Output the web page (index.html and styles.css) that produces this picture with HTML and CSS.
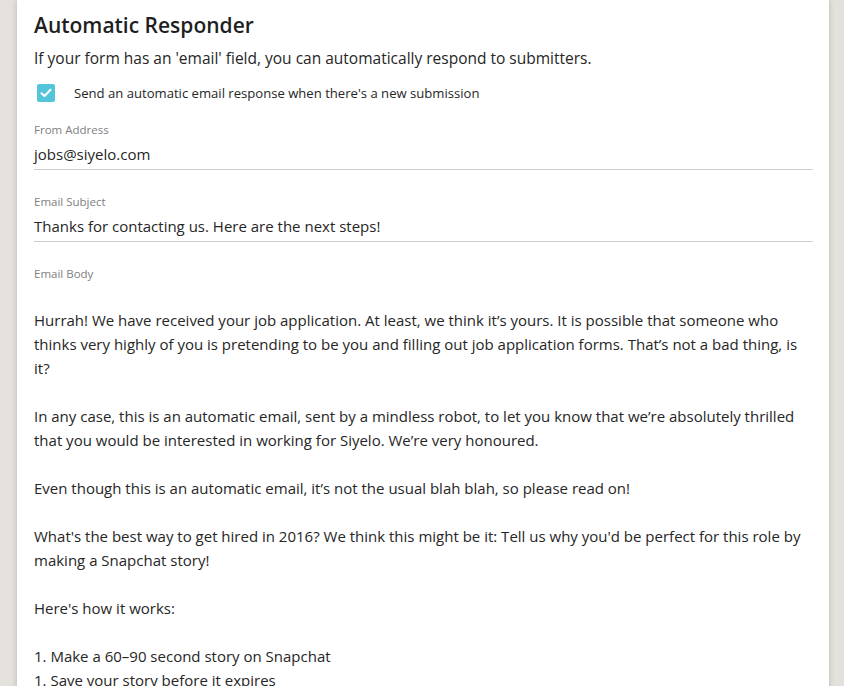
FILE: index.html
```html
<!DOCTYPE html>
<html>
<head>
<meta charset="utf-8">
<link rel="stylesheet" href="styles.css">
</head>
<body>
<div class="page">
  <div class="card">
    <h2 class="title">Automatic Responder</h2>
    <p class="intro">If your form has an 'email' field, you can automatically respond to submitters.</p>
    <label class="check-row">
      <span class="checkbox"><svg width="12" height="10" viewBox="0 0 12 10"><path d="M1.5 5.2 L4.5 8 L10.5 1.8" fill="none" stroke="#fff" stroke-width="2" stroke-linecap="round" stroke-linejoin="round"/></svg></span>
      <span class="check-label">Send an automatic email response when there's a new submission</span>
    </label>
    <div class="field">
      <div class="field-label">From Address</div>
      <div class="field-value">jobs@siyelo.com</div>
    </div>
    <div class="field">
      <div class="field-label">Email Subject</div>
      <div class="field-value">Thanks for contacting us. Here are the next steps!</div>
    </div>
    <div class="field body-field">
      <div class="field-label">Email Body</div>
      <div class="body-text">
        <p>Hurrah! We have received your job application. At least, we think it’s yours. It is possible that someone who thinks very highly of you is pretending to be you and filling out job application forms. That’s not a bad thing, is it?</p>
        <p>In any case, this is an automatic email, sent by a mindless robot, to let you know that we’re absolutely thrilled that you would be interested in working for Siyelo. We’re very honoured.</p>
        <p>Even though this is an automatic email, it’s not the usual blah blah, so please read on!</p>
        <p>What's the best way to get hired in 2016? We think this might be it: Tell us why you'd be perfect for this role by making a Snapchat story!</p>
        <p>Here's how it works:</p>
        <p>1. Make a 60–90 second story on Snapchat<br>1. Save your story before it expires</p>
      </div>
    </div>
  </div>
</div>
</body>
</html>
```

FILE: styles.css
```css
html, body {
  margin: 0;
  padding: 0;
  background: #e4e1dc;
  height: 100%;
  overflow: hidden;
}
.page {
  padding: 0 15px 0 17px;
}
.card {
  background: #fff;
  min-height: 686px;
  padding: 12px 16px 0 17px;
  box-shadow: 0 0 6px rgba(0,0,0,0.18);
  font-family: "Open Sans", "Liberation Sans", sans-serif;
  color: #262626;
}
.title {
  margin: 0;
  font-size: 21px;
  font-weight: 600;
  line-height: 26px;
  color: #1f1f1f;
}
.intro {
  margin: 8px 0 0;
  font-size: 15.5px;
  line-height: 24px;
}
.check-row {
  display: flex;
  align-items: center;
  gap: 19px;
  margin: 14px 0 0 3px;
}
.checkbox {
  width: 18px;
  height: 18px;
  border-radius: 2px;
  background: #54c5d8;
  display: flex;
  align-items: center;
  justify-content: center;
}
.check-label {
  font-size: 13.1px;
  color: #262626;
}
.field {
  margin-top: 20px;
}
.field + .field {
  margin-top: 24px;
}
.field-label {
  font-size: 11.5px;
  color: #808080;
  line-height: 16px;
}
.field-value {
  font-size: 15px;
  line-height: 24px;
  padding: 4px 0 3px;
  border-bottom: 1px solid #d2ccc6;
}
.body-text {
  margin-top: 26px;
  font-size: 15px;
  line-height: 24px;
}
.body-text p {
  margin: 0 0 24px;
}
```
